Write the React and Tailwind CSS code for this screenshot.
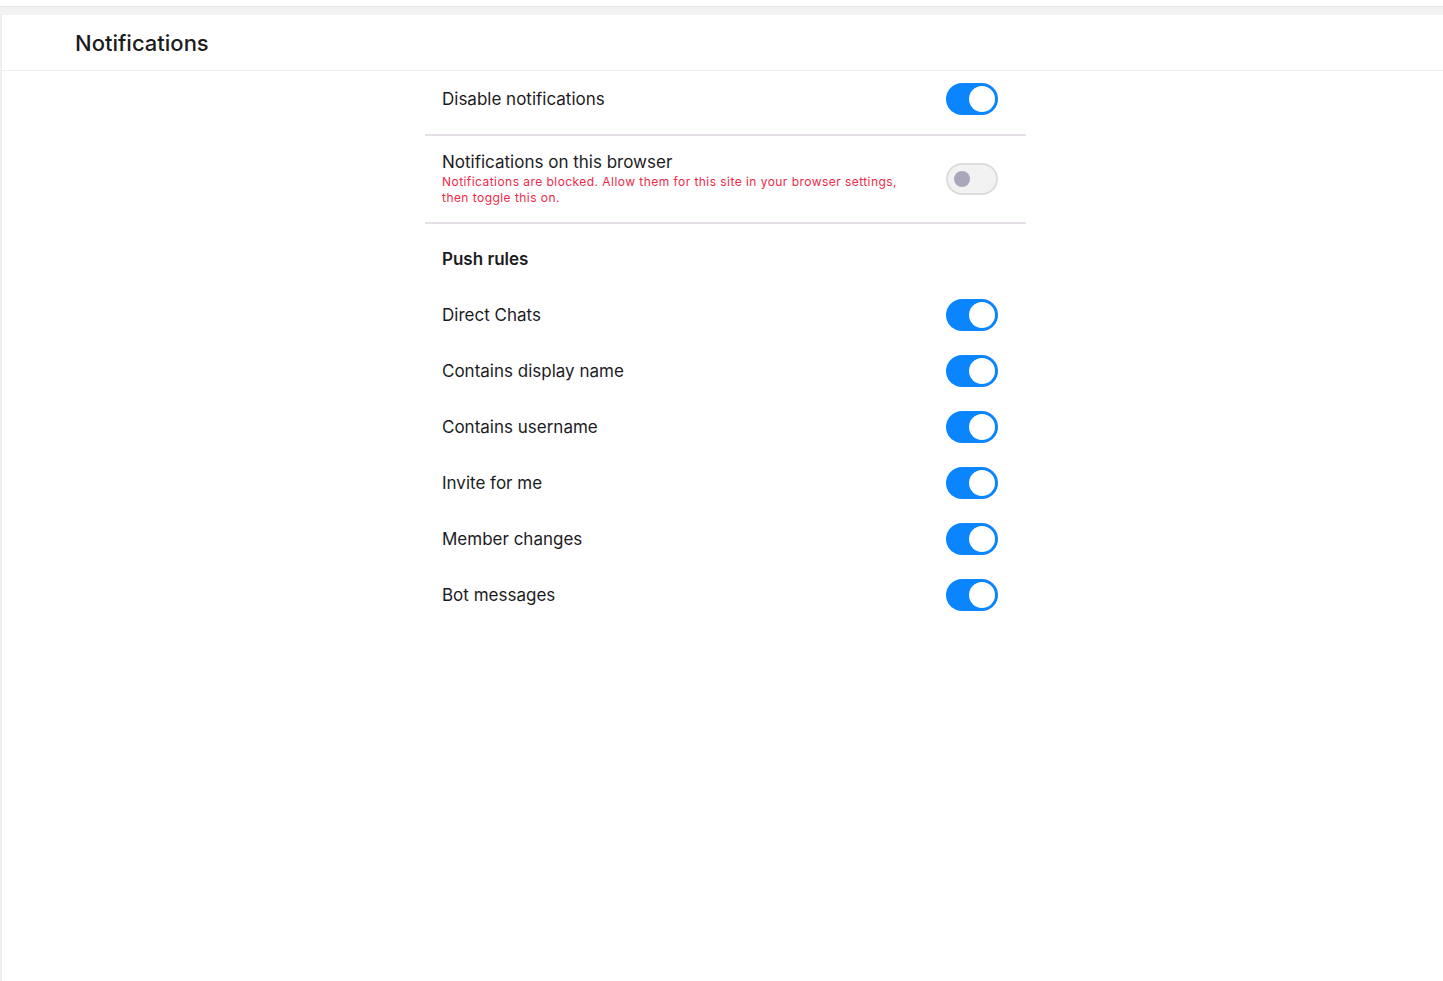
const rules = [
  { label: 'Direct Chats', on: true },
  { label: 'Contains display name', on: true },
  { label: 'Contains username', on: true },
  { label: 'Invite for me', on: true },
  { label: 'Member changes', on: true },
  { label: 'Bot messages', on: true },
];

function Toggle({ on, disabled }) {
  if (disabled) {
    return (
      <div className="w-[52px] h-[32px] rounded-full bg-[#f2f2f2] border-2 border-[#dcdcdc] flex items-center px-[6px] shrink-0">
        <span className="block w-[16px] h-[16px] rounded-full bg-[#aaa7bd]" />
      </div>
    );
  }
  return (
    <div
      className={`w-[52px] h-[32px] rounded-full flex items-center px-[3px] shrink-0 ${
        on ? 'bg-[#0a84ff] justify-end' : 'bg-[#e0e0e0] justify-start'
      }`}
    >
      <span className="block w-[26px] h-[26px] rounded-full bg-white" />
    </div>
  );
}

function Row({ children, toggle, className = '' }) {
  return (
    <div className={`flex items-center justify-between pl-[17px] pr-[28px] ${className}`}>
      <div className="min-w-0">{children}</div>
      {toggle}
    </div>
  );
}

export default function App() {
  return (
    <div
      className="min-h-screen bg-white pt-[6px] text-[#1c1c1e]"
      style={{ fontFamily: 'Inter, "Noto Sans", sans-serif' }}
    >
      <div className="border-t border-[#e6e6e6] bg-[#f2f2f2] pt-[8px]">
        <div className="ml-[1px] border-l border-[#ececec] bg-white h-[966px]">
          {/* Header */}
          <div className="h-[56px] flex items-center pl-[73px] pt-[1px] border-b border-[#f0f0f0]">
            <h1 className="text-[22px] font-medium">Notifications</h1>
          </div>

          <div className="flex justify-center pl-[6px]">
            <div className="w-[601px]">
              <Row className="pt-[12px] pb-[19px]" toggle={<Toggle on />}>
                <span className="text-[17px] leading-[20px]">Disable notifications</span>
              </Row>
              <div className="h-[2px] bg-[#e4e0e6]" />

              <Row className="h-[86px]" toggle={<Toggle disabled />}>
                <div className="text-[17px] leading-[20px]">Notifications on this browser</div>
                <div className="text-[12px] leading-[16px] tracking-[0.45px] text-[#f0284a] max-w-[470px] mt-[2px]">
                  Notifications are blocked. Allow them for this site in your browser settings,
                  then toggle this on.
                </div>
              </Row>
              <div className="h-[2px] bg-[#e4e0e6]" />

              <div className="pl-[17px] pt-[25px] h-[63px]">
                <h2 className="text-[17px] leading-[20px] font-semibold">Push rules</h2>
              </div>

              {rules.map((r) => (
                <Row key={r.label} className="h-[56px]" toggle={<Toggle on={r.on} />}>
                  <span className="text-[17px] leading-[20px]">{r.label}</span>
                </Row>
              ))}
            </div>
          </div>
        </div>
      </div>
    </div>
  );
}
